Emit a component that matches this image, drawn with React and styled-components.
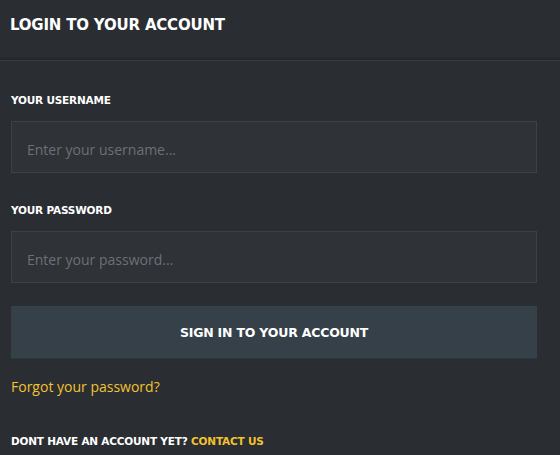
import React from 'react'
import styled, { createGlobalStyle } from 'styled-components'

const GlobalStyle = createGlobalStyle`
  html, body {
    margin: 0;
    padding: 0;
    background: #2a2d32;
  }
  * {
    box-sizing: border-box;
  }
`

const heading = `"DejaVu Sans", "Liberation Sans", sans-serif`
const body = `"Open Sans", "Noto Sans", sans-serif`

const Panel = styled.section`
  width: 560px;
  height: 455px;
  background: #2a2d32;
  display: flex;
  flex-direction: column;
  overflow: hidden;
`

const Header = styled.header`
  height: 61px;
  padding: 17px 10px 0;
  border-bottom: 1px solid #363944;
  box-shadow: 0 -2px 0 #24272b inset;
`

const Title = styled.h1`
  margin: 0;
  font-family: ${heading};
  font-weight: 700;
  font-size: 15px;
  letter-spacing: -0.2px;
  color: #ffffff;
  line-height: 16px;
`

const Form = styled.form`
  display: flex;
  flex-direction: column;
  padding: 33px 23px 0 11px;
`

const Field = styled.div`
  display: flex;
  flex-direction: column;
  gap: 15px;
  margin-bottom: 31px;
`

const Label = styled.label`
  font-family: ${heading};
  font-weight: 700;
  font-size: 10.5px;
  letter-spacing: -0.2px;
  color: #ffffff;
  line-height: 12px;
`

const Input = styled.input`
  height: 52px;
  width: 100%;
  background: #2f3237;
  border: 1px solid #3d4046;
  color: #d0d0d0;
  padding: 4px 15px 0;
  font-family: ${body};
  font-size: 14px;
  outline: none;
  &::placeholder {
    color: #6c7078;
  }
`

const Button = styled.button`
  height: 53px;
  margin-top: -8px;
  width: 100%;
  background: #354049;
  border: none;
  border-bottom: 1px solid #2e363d;
  color: #ffffff;
  font-family: ${heading};
  font-weight: 700;
  font-size: 12.5px;
  letter-spacing: -0.2px;
  padding-top: 2px;
  cursor: pointer;
`

const Forgot = styled.a`
  margin-top: 19px;
  font-family: ${body};
  font-size: 14px;
  color: #f2c230;
  text-decoration: none;
  line-height: 18px;
`

const Footer = styled.p`
  margin: 39px 0 0;
  font-family: ${heading};
  font-weight: 700;
  font-size: 10.5px;
  letter-spacing: -0.2px;
  color: #ffffff;
  line-height: 12px;
`

const Accent = styled.a`
  color: #f2c230;
  text-decoration: none;
`

export default function App() {
  return (
    <>
      <GlobalStyle />
      <Panel>
        <Header>
          <Title>LOGIN TO YOUR ACCOUNT</Title>
        </Header>
        <Form onSubmit={e => e.preventDefault()}>
          <Field>
            <Label htmlFor="username">YOUR USERNAME</Label>
            <Input id="username" placeholder="Enter your username..." />
          </Field>
          <Field>
            <Label htmlFor="password">YOUR PASSWORD</Label>
            <Input id="password" type="password" placeholder="Enter your password..." />
          </Field>
          <Button type="submit">SIGN IN TO YOUR ACCOUNT</Button>
          <Forgot href="#">Forgot your password?</Forgot>
          <Footer>
            DONT HAVE AN ACCOUNT YET? <Accent href="#">CONTACT US</Accent>
          </Footer>
        </Form>
      </Panel>
    </>
  )
}
